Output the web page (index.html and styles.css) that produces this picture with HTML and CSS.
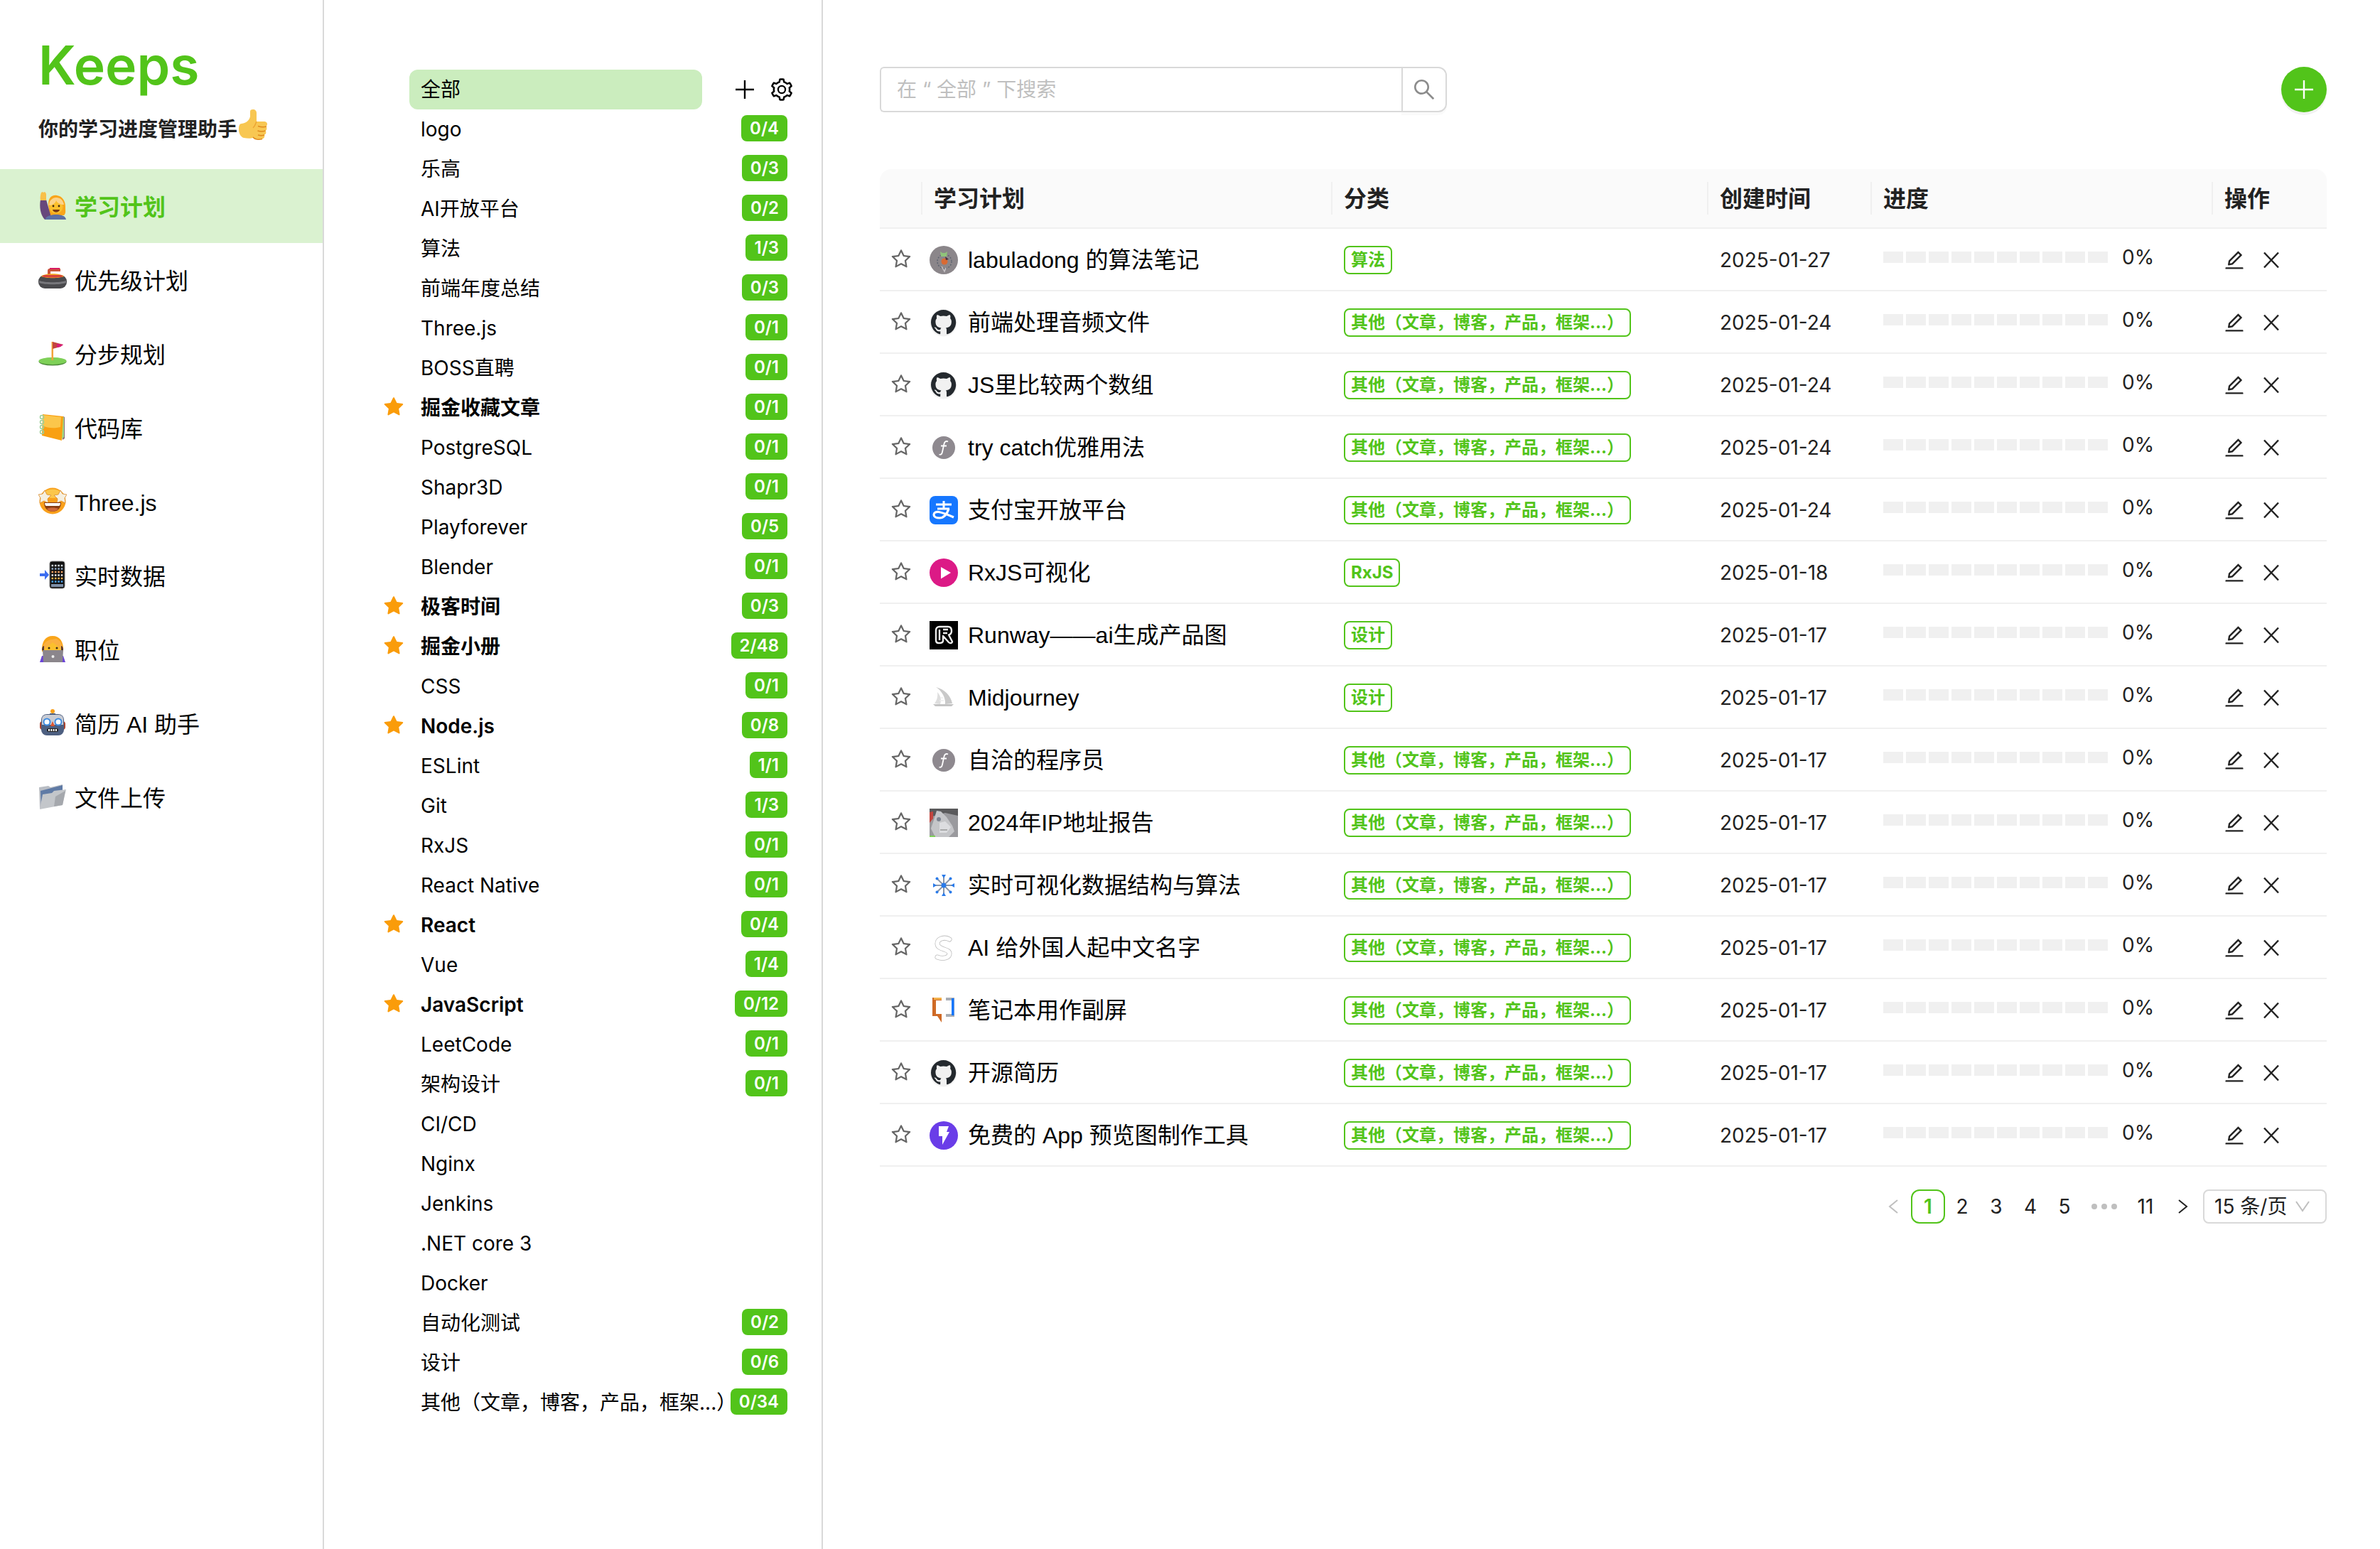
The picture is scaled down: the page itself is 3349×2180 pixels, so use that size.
FILE: index.html
```html
<!DOCTYPE html>
<html lang="zh-CN">
<head>
<meta charset="utf-8">
<title>Keeps</title>
<link rel="stylesheet" href="styles.css">
</head>
<body>
<svg class="sprite" aria-hidden="true">
  <symbol id="star-o" viewBox="0 0 1024 1024"><path d="M908.1 353.1l-253.9-36.9L540.7 86.1c-3.1-6.3-8.2-11.4-14.5-14.5-15.8-7.8-35-1.3-42.9 14.5L369.8 316.2l-253.9 36.9c-7 1-13.4 4.3-18.3 9.3a32.05 32.05 0 00.6 45.3l183.7 179.1-43.4 252.9a31.95 31.95 0 0046.4 33.7L512 754l227.1 119.4c6.2 3.3 13.4 4.4 20.3 3.2 17.4-3 29.1-19.5 26.1-36.9l-43.4-252.9 183.7-179.1c5-4.9 8.3-11.3 9.3-18.3 2.7-17.5-9.5-33.7-27-36.3zM664.8 561.6l36.1 210.3L512 672.7 323.1 772l36.1-210.3-152.8-149L417.6 382 512 190.7 606.4 382l211.2 30.7-152.8 148.9z"/></symbol>
  <symbol id="star-f" viewBox="0 0 1024 1024"><path d="M908.1 353.1l-253.9-36.9L540.7 86.1c-3.1-6.3-8.2-11.4-14.5-14.5-15.8-7.8-35-1.3-42.9 14.5L369.8 316.2l-253.9 36.9c-7 1-13.4 4.3-18.3 9.3a32.05 32.05 0 00.6 45.3l183.7 179.1-43.4 252.9a31.95 31.95 0 0046.4 33.7L512 754l227.1 119.4c6.2 3.3 13.4 4.4 20.3 3.2 17.4-3 29.1-19.5 26.1-36.9l-43.4-252.9 183.7-179.1c5-4.9 8.3-11.3 9.3-18.3 2.7-17.5-9.5-33.7-27-36.3z"/></symbol>
  <symbol id="search" viewBox="0 0 1024 1024"><path d="M909.6 854.5L649.9 594.8C690.2 542.7 712 479 712 412c0-80.2-31.3-155.4-87.9-212.1-56.6-56.7-132-87.9-212.1-87.9s-155.5 31.3-212.1 87.9C143.2 256.5 112 331.8 112 412c0 80.1 31.3 155.5 87.9 212.1C256.5 680.8 331.8 712 412 712c67 0 130.6-21.8 182.7-62l259.7 259.6a8.2 8.2 0 0011.6 0l43.6-43.5a8.2 8.2 0 000-11.6zM570.4 570.4C528 612.7 471.8 636 412 636s-116-23.3-158.4-65.6C211.3 528 188 471.8 188 412s23.3-116.1 65.6-158.4C296 211.3 352.2 188 412 188s116.1 23.2 158.4 65.6S636 352.2 636 412s-23.3 116.1-65.6 158.4z"/></symbol>
  <symbol id="edit" viewBox="0 0 1024 1024"><path d="M257.7 752c2 0 4-.2 6-.5L431.9 722c2-.4 3.9-1.3 5.3-2.8l423.9-423.9a9.96 9.96 0 000-14.1L694.9 114.9c-1.9-1.9-4.4-2.9-7.1-2.9s-5.2 1-7.1 2.9L256.8 538.8c-1.5 1.5-2.4 3.3-2.8 5.3l-29.5 168.2a33.5 33.5 0 009.4 29.8c6.6 6.4 14.9 9.9 23.8 9.9zm67.4-174.4L687.8 215l73.3 73.3-362.7 362.6-88.9 15.7 15.6-89zM880 836H144c-17.7 0-32 14.3-32 32v36c0 4.4 3.6 8 8 8h784c4.4 0 8-3.6 8-8v-36c0-17.7-14.3-32-32-32z"/></symbol>
  <symbol id="gear" viewBox="0 0 1024 1024"><path d="M924.8 625.7l-65.5-56c3.1-19 4.7-38.4 4.7-57.8s-1.6-38.8-4.7-57.8l65.5-56a32.03 32.03 0 009.3-35.2l-.9-2.6a443.74 443.74 0 00-79.7-137.9l-1.8-2.1a32.12 32.12 0 00-35.1-9.5l-81.3 28.9c-30-24.6-63.5-44-99.7-57.6l-15.7-85a32.05 32.05 0 00-25.8-25.7l-2.7-.5c-52.1-9.4-106.9-9.4-159 0l-2.7.5a32.05 32.05 0 00-25.8 25.7l-15.8 85.4a351.86 351.86 0 00-99 57.4l-81.9-29.1a32 32 0 00-35.1 9.5l-1.8 2.1a446.02 446.02 0 00-79.7 137.9l-.9 2.6c-4.5 12.5-.8 26.5 9.3 35.2l66.3 56.6c-3.1 18.8-4.6 38-4.6 57.1 0 19.2 1.5 38.4 4.6 57.1L99 625.5a32.03 32.03 0 00-9.3 35.2l.9 2.6c18.1 50.4 44.9 96.9 79.7 137.9l1.8 2.1a32.12 32.12 0 0035.1 9.5l81.9-29.1c29.8 24.5 63.1 43.9 99 57.4l15.8 85.4a32.05 32.05 0 0025.8 25.7l2.7.5a449.4 449.4 0 00159 0l2.7-.5a32.05 32.05 0 0025.8-25.7l15.7-85a350 350 0 0099.7-57.6l81.3 28.9a32 32 0 0035.1-9.5l1.8-2.1c34.8-41.1 61.6-87.5 79.7-137.9l.9-2.6c4.5-12.3.8-26.3-9.3-35zM788.3 465.9c2.5 15.1 3.8 30.6 3.8 46.1s-1.3 31-3.8 46.1l-6.6 40.1 74.7 63.9a370.03 370.03 0 01-42.6 73.6L721 702.8l-31.4 25.8c-23.9 19.6-50.5 35-79.3 45.8l-38.1 14.3-17.9 97a377.5 377.5 0 01-85 0l-17.9-97.2-37.8-14.5c-28.5-10.8-55-26.2-78.7-45.7l-31.4-25.9-93.4 33.2c-17-22.9-31.2-47.6-42.6-73.6l75.5-64.5-6.5-40c-2.4-14.9-3.7-30.3-3.7-45.5 0-15.3 1.2-30.6 3.7-45.5l6.5-40-75.5-64.5c11.3-26.1 25.6-50.7 42.6-73.6l93.4 33.2 31.4-25.9c23.7-19.5 50.2-34.9 78.7-45.7l37.9-14.3 17.9-97.2c28.1-3.2 56.8-3.2 85 0l17.9 97 38.1 14.3c28.7 10.8 55.4 26.2 79.3 45.8l31.4 25.8 92.8-32.9c17 22.9 31.2 47.6 42.6 73.6L781.8 426l6.5 39.9zM512 336a176 176 0 100 352 176 176 0 000-352zm0 64a112 112 0 110 224 112 112 0 010-224z"/></symbol>
  <symbol id="plus" viewBox="0 0 32 32"><path d="M16 3v26M3 16h26" fill="none" stroke="currentColor" stroke-width="2.4"/></symbol>
  <symbol id="close" viewBox="0 0 32 32"><path d="M6 5.500l20 21M26 5.500l-20 21" fill="none" stroke="currentColor" stroke-width="2.500"/></symbol>
  <symbol id="github" viewBox="0 0 40 40"><circle cx="19.500" cy="20.500" r="19" fill="#f1f1f1"/><path transform="translate(2 2) scale(2.200)" fill="#24292e" d="M8 0C3.580 0 0 3.580 0 8c0 3.540 2.290 6.530 5.470 7.590.4.070.55-.17.55-.38 0-.19-.01-.82-.01-1.490-2.010.37-2.530-.49-2.690-.94-.09-.23-.48-.94-.82-1.130-.28-.15-.68-.52-.01-.53.63-.01 1.080.58 1.230.82.72 1.210 1.870.87 2.330.66.07-.52.28-.87.51-1.070-1.780-.2-3.640-.89-3.640-3.950 0-.87.31-1.590.82-2.150-.08-.2-.36-1.020.08-2.120 0 0 .67-.21 2.200.82.64-.18 1.320-.27 2-.27s1.360.09 2 .27c1.530-1.040 2.200-.82 2.200-.82.44 1.100.16 1.920.08 2.120.51.56.82 1.270.82 2.150 0 3.070-1.870 3.750-3.650 3.950.29.25.54.73.54 1.480 0 1.070-.01 1.930-.01 2.200 0 .21.15.46.55.38A8.010 8.010 0 0016 8c0-4.420-3.580-8-8-8z"/></symbol>
  <symbol id="fn" viewBox="0 0 40 40"><circle cx="20" cy="20" r="16" fill="#8e898f"/><path d="M26 11.500c-3-1.500-5 .5-5.600 3.500l-2.400 11c-.6 3-2 4.500-4.500 3.500M16 17.500h8" fill="none" stroke="#fff" stroke-width="1.800"/></symbol>
</svg>

<aside class="sidebar">
  <header class="brand">
    <h1>Keeps</h1>
    <p>你的学习进度管理助手<svg class="thumb" viewBox="0 0 40 44" aria-hidden="true"><path d="M16 3c0-2 1-3 4-3 3 0 5 2 5 5v12h10c4 0 5 2 5 3.500 0 2-1 3-2 3.500 2 1 2 5-.5 6 1.500 1.500 1 5-1.500 5.500 1 3-.5 5.500-3 6-4 1-10 .5-13-1.500-3 1-8 1-13 0C3 39 0 34 0 28c0-5 1-8 4-8 7-1 11-5 12-10z" fill="#f8c752"/><path d="M39 24c-3 1-9 .5-12-.5M37.500 30c-3 1-8 1-11 0M36 36c-3 1-7 .5-9 0M20 39c2 3 8 4 13 2.500" fill="none" stroke="#e08a1d" stroke-width="1.500"/><path d="M25 17c-2 4-2 7-5 9" fill="none" stroke="#eda532" stroke-width="1.500"/></svg></p>
  </header>
  <nav>
    <a class="nav-item active" href="#"><svg viewBox="0 0 40 40"><path d="M14 19c0-9 4-14 12-13 8 1 12 8 12 16 0 7 1 9-2 12H16z" fill="#f9a51a"/><path d="M3 12h8l4 14 4 14H9C3 34 1 22 3 12z" fill="#67477c"/><path d="M3 13c-1-4 0-8 1-11l2-1 1 1 2-1 1 1 1 2v9z" fill="#f8c04a"/><circle cx="25" cy="22" r="9.500" fill="#fbc02d"/><path d="M15 20c5 0 9-3 10-7 2 4 6 6 11 6-1-6-5-10-11-10-5 0-10 4-10 11z" fill="#fbd38a"/><circle cx="21" cy="21" r="1.400" fill="#3d2a12"/><circle cx="29" cy="21" r="1.400" fill="#3d2a12"/><path d="M20 26h10c-1 5-9 5-10 0z" fill="#7a3b12"/><path d="M9 40c2-5 8-7 16-7s13 2 14 7z" fill="#5d6fa3"/></svg>学习计划</a>
    <a class="nav-item" href="#"><svg viewBox="0 0 40 40"><path d="M13 16V8c0-2 1-3 3-3h15v4H17v7z" fill="#c9533b"/><path d="M16 4h14v2H16z" fill="#d81b60"/><rect x="0" y="14" width="40" height="19" rx="9" fill="#4a4a4d"/><path d="M4 16c4-5 28-5 32 0-6 3-26 3-32 0z" fill="#f5a623"/><path d="M5 16c4 2 26 2 30 0l-3-2H8z" fill="#d8433a"/><path d="M1 22c8 3 30 3 38 0v3c-8 3-30 3-38 0z" fill="#77777b"/></svg>优先级计划</a>
    <a class="nav-item" href="#"><svg viewBox="0 0 40 40"><ellipse cx="20" cy="32" rx="19.500" ry="5.500" fill="#4f8e3c"/><ellipse cx="20" cy="31" rx="19.500" ry="5" fill="#7ed057"/><path d="M18.500 4h2.500v26h-2.500z" fill="#f2a33a"/><path d="M20 4l15 4-4 3-11 3z" fill="#c2453f"/><path d="M26 7l9 1-4 3-5 1z" fill="#d81b7a"/></svg>分步规划</a>
    <a class="nav-item" href="#"><svg viewBox="0 0 40 40"><path d="M35 5l2 1v30l-3 2z" fill="#8a6a78"/><path d="M32 5l4 1v28l-3 3z" fill="#9fdc8a"/><path d="M6 2l29 3-2 34L5 32z" fill="#f9a011"/><path d="M6 3l26 3-1 14c-8 2-18 2-25-2z" fill="#fbc64b"/><g fill="none" stroke="#9ccf9a" stroke-width="1.500"><circle cx="5" cy="6" r="2.500"/><circle cx="5" cy="13" r="2.500"/><circle cx="5" cy="20" r="2.500"/><circle cx="5" cy="27" r="2.500"/></g></svg>代码库</a>
    <a class="nav-item" href="#"><svg viewBox="0 0 40 40"><circle cx="20" cy="20" r="18.500" fill="#f9a01b"/><path d="M8 8c5-6 19-6 24 0 3 4-4 8-12 8S5 12 8 8z" fill="#fbc64b"/><path d="M9 5l3 6 6 1-5 5 1 6-6-3-6 3 1-7-3-5 6-1zM31 5l-3 6-6 1 5 5-1 6 6-3 6 3-1-7 3-5-6-1z" fill="#f5efe0" stroke="#d98a2b" stroke-width=".8"/><path d="M8 22h24c0 8-5 13-12 13S8 30 8 22z" fill="#8a3d12"/><path d="M9 23h22c0 2-1 4-2 4H11c-1 0-2-2-2-4z" fill="#fff"/><path d="M12 31c4-2 12-2 16 0-4 5-12 5-16 0z" fill="#cf6a3d"/></svg>Three.js</a>
    <a class="nav-item" href="#"><svg viewBox="0 0 40 40"><rect x="16" y="1" width="21" height="38" rx="3" fill="#111"/><rect x="16" y="1" width="21" height="38" rx="3" fill="none" stroke="#777" stroke-width="1"/><path d="M2 18h7v-5l6 7-6 7v-5H2z" fill="#3c6df0"/><g stroke-width="2.600" stroke-dasharray="2.600 1.800"><path d="M18.500 7h17" stroke="#cfd8dc"/><path d="M18.500 11.500h17" stroke="#8ea6c0"/><path d="M18.500 16h17" stroke="#f0a060"/><path d="M18.500 20.500h17" stroke="#e8e8e8"/><path d="M18.500 25h17" stroke="#f2b04a"/><path d="M18.500 29.500h17" stroke="#4aa3f0"/></g><path d="M18 33h17v4H18z" fill="#7d8fa8"/></svg>实时数据</a>
    <a class="nav-item" href="#"><svg viewBox="0 0 40 40"><path d="M5 24C4 10 10 2 20 2s16 8 15 22z" fill="#f9a51a"/><path d="M8 18l4-8 16-2 4 10v8H8z" fill="#fbc02d"/><path d="M6 22c0-9 5-14 13-15l6-1c6 2 9 8 9 16l-5-4-9-7c-4 4-9 7-14 11z" fill="#fbb040"/><path d="M5 22c0-3 1-6 3-6v7zM35 22c0-3-1-6-3-6v7z" fill="#5a3a30"/><circle cx="15" cy="19" r="1.500" fill="#3d2a12"/><circle cx="26" cy="19" r="1.500" fill="#3d2a12"/><path d="M2 39l3-9h30l3 9z" fill="#6b44d8"/><path d="M6 22h29l-1 17H7z" fill="#8b868c"/><circle cx="20.500" cy="31" r="2" fill="#eee"/></svg>职位</a>
    <a class="nav-item" href="#"><svg viewBox="0 0 40 40"><circle cx="20" cy="4" r="3" fill="#f9a01b"/><path d="M16 7h8v4h-8z" fill="#4b5d7d"/><rect x="2" y="18" width="36" height="12" rx="4" fill="#b0452f"/><rect x="4" y="8" width="32" height="30" rx="8" fill="#4d5f80"/><path d="M5 23v-7c0-5 3-7 7-7h16c4 0 7 2 7 7v7z" fill="#c9ccd4"/><circle cx="12" cy="19" r="4.500" fill="#fff" stroke="#3d8be0" stroke-width="2"/><circle cx="28" cy="19" r="4.500" fill="#fff" stroke="#3d8be0" stroke-width="2"/><path d="M20 18l3 7h-6z" fill="#e0552f"/><rect x="12" y="28" width="16" height="5" rx="2.500" fill="#222"/><path d="M14 30.500h12" stroke="#fff" stroke-width="3" stroke-dasharray="2 1.300"/></svg>简历 AI 助手</a>
    <a class="nav-item" href="#"><svg viewBox="0 0 40 40"><path d="M1 7l13-2 3 2 17-4v24L2 37z" fill="#b9bdc4"/><path d="M3 12l31-8v22L4 34z" fill="#5f7aa5"/><path d="M6 17l13-2 3-3 17-2-5 22-32 6z" fill="#c3c6ca"/><path d="M24 20l14-8-4 20-12 2z" fill="#a5a8ad"/></svg>文件上传</a>
  </nav>
</aside>

<section class="categories" aria-label="分类">
  <div class="category-head">
    <span class="mark"></span>
    <a class="all" href="#">全部</a>
    <button class="icon-button" aria-label="添加分类"><svg class="icon-32"><use href="#plus"/></svg></button>
    <button class="icon-button" aria-label="分类设置"><svg class="icon-36"><use href="#gear"/></svg></button>
  </div>
  <ul>
    <li><span class="mark"></span><a href="#">logo</a><b class="badge">0/4</b></li>
    <li><span class="mark"></span><a href="#">乐高</a><b class="badge">0/3</b></li>
    <li><span class="mark"></span><a href="#">AI开放平台</a><b class="badge">0/2</b></li>
    <li><span class="mark"></span><a href="#">算法</a><b class="badge">1/3</b></li>
    <li><span class="mark"></span><a href="#">前端年度总结</a><b class="badge">0/3</b></li>
    <li><span class="mark"></span><a href="#">Three.js</a><b class="badge">0/1</b></li>
    <li><span class="mark"></span><a href="#">BOSS直聘</a><b class="badge">0/1</b></li>
    <li class="starred"><svg class="mark"><use href="#star-f"/></svg><a href="#">掘金收藏文章</a><b class="badge">0/1</b></li>
    <li><span class="mark"></span><a href="#">PostgreSQL</a><b class="badge">0/1</b></li>
    <li><span class="mark"></span><a href="#">Shapr3D</a><b class="badge">0/1</b></li>
    <li><span class="mark"></span><a href="#">Playforever</a><b class="badge">0/5</b></li>
    <li><span class="mark"></span><a href="#">Blender</a><b class="badge">0/1</b></li>
    <li class="starred"><svg class="mark"><use href="#star-f"/></svg><a href="#">极客时间</a><b class="badge">0/3</b></li>
    <li class="starred"><svg class="mark"><use href="#star-f"/></svg><a href="#">掘金小册</a><b class="badge">2/48</b></li>
    <li><span class="mark"></span><a href="#">CSS</a><b class="badge">0/1</b></li>
    <li class="starred"><svg class="mark"><use href="#star-f"/></svg><a href="#">Node.js</a><b class="badge">0/8</b></li>
    <li><span class="mark"></span><a href="#">ESLint</a><b class="badge">1/1</b></li>
    <li><span class="mark"></span><a href="#">Git</a><b class="badge">1/3</b></li>
    <li><span class="mark"></span><a href="#">RxJS</a><b class="badge">0/1</b></li>
    <li><span class="mark"></span><a href="#">React Native</a><b class="badge">0/1</b></li>
    <li class="starred"><svg class="mark"><use href="#star-f"/></svg><a href="#">React</a><b class="badge">0/4</b></li>
    <li><span class="mark"></span><a href="#">Vue</a><b class="badge">1/4</b></li>
    <li class="starred"><svg class="mark"><use href="#star-f"/></svg><a href="#">JavaScript</a><b class="badge">0/12</b></li>
    <li><span class="mark"></span><a href="#">LeetCode</a><b class="badge">0/1</b></li>
    <li><span class="mark"></span><a href="#">架构设计</a><b class="badge">0/1</b></li>
    <li><span class="mark"></span><a href="#">CI/CD</a></li>
    <li><span class="mark"></span><a href="#">Nginx</a></li>
    <li><span class="mark"></span><a href="#">Jenkins</a></li>
    <li><span class="mark"></span><a href="#">.NET core 3</a></li>
    <li><span class="mark"></span><a href="#">Docker</a></li>
    <li><span class="mark"></span><a href="#">自动化测试</a><b class="badge">0/2</b></li>
    <li><span class="mark"></span><a href="#">设计</a><b class="badge">0/6</b></li>
    <li><span class="mark"></span><a href="#">其他（文章，博客，产品，框架...）</a><b class="badge">0/34</b></li>
  </ul>
</section>

<main>
  <div class="toolbar">
    <form class="search">
      <input type="text" aria-label="搜索" placeholder="在 “ 全部 ” 下搜索">
      <button type="button" aria-label="搜索"><svg class="icon-36"><use href="#search"/></svg></button>
    </form>
    <button class="add" aria-label="添加学习计划"><svg class="icon-32"><use href="#plus"/></svg></button>
  </div>

  <table>
    <colgroup><col class="c-star"><col class="c-title"><col><col class="c-date"><col class="c-progress"><col class="c-actions"></colgroup>
    <thead>
      <tr><th></th><th>学习计划</th><th>分类</th><th>创建时间</th><th>进度</th><th>操作</th></tr>
    </thead>
    <tbody>
      <tr><td><button class="fav" aria-label="收藏"><svg class="icon-32"><use href="#star-o"/></svg></button></td>
        <td><a class="plan" href="#"><svg viewBox="0 0 40 40"><circle cx="20" cy="20" r="20" fill="#8b868a"/><circle cx="21" cy="22" r="10" fill="none" stroke="#5d6470" stroke-width="1.500" stroke-dasharray="2 2"/><path d="M15 8l3 2h4l3-2-1 7h-8z" fill="#8fc47a"/><circle cx="21" cy="22" r="4.500" fill="#d96a34"/><path d="M22 15l5 4-4 1z" fill="#4a3040"/><path d="M17 29l4 7 2-5" fill="none" stroke="#c6c2c6" stroke-width="1.500"/></svg>labuladong 的算法笔记</a></td>
        <td><span class="tag">算法</span></td><td>2025-01-27</td>
        <td><div class="progress"><span class="track" role="progressbar" aria-valuenow="0" aria-label="进度"></span>0%</div></td>
        <td><div class="actions"><button aria-label="编辑"><svg class="icon-32"><use href="#edit"/></svg></button><button aria-label="删除"><svg class="icon-32"><use href="#close"/></svg></button></div></td></tr>
      <tr><td><button class="fav" aria-label="收藏"><svg class="icon-32"><use href="#star-o"/></svg></button></td>
        <td><a class="plan" href="#"><svg><use href="#github"/></svg>前端处理音频文件</a></td>
        <td><span class="tag">其他（文章，博客，产品，框架...）</span></td><td>2025-01-24</td>
        <td><div class="progress"><span class="track" role="progressbar" aria-valuenow="0" aria-label="进度"></span>0%</div></td>
        <td><div class="actions"><button aria-label="编辑"><svg class="icon-32"><use href="#edit"/></svg></button><button aria-label="删除"><svg class="icon-32"><use href="#close"/></svg></button></div></td></tr>
      <tr><td><button class="fav" aria-label="收藏"><svg class="icon-32"><use href="#star-o"/></svg></button></td>
        <td><a class="plan" href="#"><svg><use href="#github"/></svg>JS里比较两个数组</a></td>
        <td><span class="tag">其他（文章，博客，产品，框架...）</span></td><td>2025-01-24</td>
        <td><div class="progress"><span class="track" role="progressbar" aria-valuenow="0" aria-label="进度"></span>0%</div></td>
        <td><div class="actions"><button aria-label="编辑"><svg class="icon-32"><use href="#edit"/></svg></button><button aria-label="删除"><svg class="icon-32"><use href="#close"/></svg></button></div></td></tr>
      <tr><td><button class="fav" aria-label="收藏"><svg class="icon-32"><use href="#star-o"/></svg></button></td>
        <td><a class="plan" href="#"><svg><use href="#fn"/></svg>try catch优雅用法</a></td>
        <td><span class="tag">其他（文章，博客，产品，框架...）</span></td><td>2025-01-24</td>
        <td><div class="progress"><span class="track" role="progressbar" aria-valuenow="0" aria-label="进度"></span>0%</div></td>
        <td><div class="actions"><button aria-label="编辑"><svg class="icon-32"><use href="#edit"/></svg></button><button aria-label="删除"><svg class="icon-32"><use href="#close"/></svg></button></div></td></tr>
      <tr><td><button class="fav" aria-label="收藏"><svg class="icon-32"><use href="#star-o"/></svg></button></td>
        <td><a class="plan" href="#"><svg viewBox="0 0 40 40"><rect width="40" height="40" rx="8" fill="#1677ff"/><g fill="none" stroke="#fff" stroke-width="3"><path d="M9 12h22M20 7v11M11 18h17"/><path d="M27 18c-2 6-6 13-13 13-5 0-8-2-8-4.500 0-3 3-4.500 7-4 6 1 13 4 21 7.500" stroke-width="3.200"/></g></svg>支付宝开放平台</a></td>
        <td><span class="tag">其他（文章，博客，产品，框架...）</span></td><td>2025-01-24</td>
        <td><div class="progress"><span class="track" role="progressbar" aria-valuenow="0" aria-label="进度"></span>0%</div></td>
        <td><div class="actions"><button aria-label="编辑"><svg class="icon-32"><use href="#edit"/></svg></button><button aria-label="删除"><svg class="icon-32"><use href="#close"/></svg></button></div></td></tr>
      <tr><td><button class="fav" aria-label="收藏"><svg class="icon-32"><use href="#star-o"/></svg></button></td>
        <td><a class="plan" href="#"><svg viewBox="0 0 40 40"><circle cx="20" cy="20" r="20" fill="#dc1a86"/><path d="M16 12l14 8-14 8.500z" fill="#fff"/></svg>RxJS可视化</a></td>
        <td><span class="tag">RxJS</span></td><td>2025-01-18</td>
        <td><div class="progress"><span class="track" role="progressbar" aria-valuenow="0" aria-label="进度"></span>0%</div></td>
        <td><div class="actions"><button aria-label="编辑"><svg class="icon-32"><use href="#edit"/></svg></button><button aria-label="删除"><svg class="icon-32"><use href="#close"/></svg></button></div></td></tr>
      <tr><td><button class="fav" aria-label="收藏"><svg class="icon-32"><use href="#star-o"/></svg></button></td>
        <td><a class="plan" href="#"><svg viewBox="0 0 40 40"><rect width="40" height="40" fill="#000"/><path d="M13 31c-3 0-4-1-4-4V13c0-3 2-5 5-5h12c4 0 5 3 5 6s-2 5-4 5.500L32 29c0 2-3 3-5 1l-8-9v7c0 2-2 3-6 3zM14 12v15M19 12h7M19 17h6" fill="none" stroke="#eee" stroke-width="2.400" stroke-linejoin="round"/></svg>Runway——ai生成产品图</a></td>
        <td><span class="tag">设计</span></td><td>2025-01-17</td>
        <td><div class="progress"><span class="track" role="progressbar" aria-valuenow="0" aria-label="进度"></span>0%</div></td>
        <td><div class="actions"><button aria-label="编辑"><svg class="icon-32"><use href="#edit"/></svg></button><button aria-label="删除"><svg class="icon-32"><use href="#close"/></svg></button></div></td></tr>
      <tr><td><button class="fav" aria-label="收藏"><svg class="icon-32"><use href="#star-o"/></svg></button></td>
        <td><a class="plan" href="#"><svg viewBox="0 0 40 40"><path d="M9 5c12 3 21 12 23 23l-10 1c1-9-5-19-13-24z" fill="#c9c9c9"/><path d="M11 12c5 6 6 11 4 17l-8-1c3-4 5-9 4-16z" fill="#dedede"/><path d="M5 29h29l-3 3H8z" fill="#c4c4c4"/><path d="M14 24h6M15 20h4" stroke="#eee" stroke-width="1.500"/></svg>Midjourney</a></td>
        <td><span class="tag">设计</span></td><td>2025-01-17</td>
        <td><div class="progress"><span class="track" role="progressbar" aria-valuenow="0" aria-label="进度"></span>0%</div></td>
        <td><div class="actions"><button aria-label="编辑"><svg class="icon-32"><use href="#edit"/></svg></button><button aria-label="删除"><svg class="icon-32"><use href="#close"/></svg></button></div></td></tr>
      <tr><td><button class="fav" aria-label="收藏"><svg class="icon-32"><use href="#star-o"/></svg></button></td>
        <td><a class="plan" href="#"><svg><use href="#fn"/></svg>自洽的程序员</a></td>
        <td><span class="tag">其他（文章，博客，产品，框架...）</span></td><td>2025-01-17</td>
        <td><div class="progress"><span class="track" role="progressbar" aria-valuenow="0" aria-label="进度"></span>0%</div></td>
        <td><div class="actions"><button aria-label="编辑"><svg class="icon-32"><use href="#edit"/></svg></button><button aria-label="删除"><svg class="icon-32"><use href="#close"/></svg></button></div></td></tr>
      <tr><td><button class="fav" aria-label="收藏"><svg class="icon-32"><use href="#star-o"/></svg></button></td>
        <td><a class="plan" href="#"><svg viewBox="0 0 40 40"><rect width="40" height="40" fill="#9a9a9e"/><path d="M0 0h40v10L22 6 0 12z" fill="#5a5a5c"/><path d="M0 5l5-1v10l-5 6z" fill="#c2453f"/><path d="M10 3l6 1 8 8 8 12 3 8-8 8H8L2 28l4-12z" fill="#c4c5c8"/><path d="M14 20l8-2 8 8-6 8h-10z" fill="#dcdde0"/><circle cx="13" cy="15" r="3" fill="#7b8390"/><path d="M15 30h10" stroke="#999" stroke-width="1.500"/><path d="M0 38h8v2H0z" fill="#7ed057"/></svg>2024年IP地址报告</a></td>
        <td><span class="tag">其他（文章，博客，产品，框架...）</span></td><td>2025-01-17</td>
        <td><div class="progress"><span class="track" role="progressbar" aria-valuenow="0" aria-label="进度"></span>0%</div></td>
        <td><div class="actions"><button aria-label="编辑"><svg class="icon-32"><use href="#edit"/></svg></button><button aria-label="删除"><svg class="icon-32"><use href="#close"/></svg></button></div></td></tr>
      <tr><td><button class="fav" aria-label="收藏"><svg class="icon-32"><use href="#star-o"/></svg></button></td>
        <td><a class="plan" href="#"><svg viewBox="0 0 40 40"><path d="M20 7v26M7 20h26M11 11l18 18M29 11L11 29" stroke="#8a96a8" stroke-width="2"/><g fill="#2a7bea"><circle cx="20" cy="20" r="3.500"/><path d="M17 5h6l-3 5zM17 35h6l-3-5zM5 17v6l5-3zM35 17v6l-5-3z"/><circle cx="10.500" cy="10.500" r="2"/><circle cx="29.500" cy="10.500" r="2"/><circle cx="10.500" cy="29.500" r="2"/><circle cx="29.500" cy="29.500" r="2"/></g></svg>实时可视化数据结构与算法</a></td>
        <td><span class="tag">其他（文章，博客，产品，框架...）</span></td><td>2025-01-17</td>
        <td><div class="progress"><span class="track" role="progressbar" aria-valuenow="0" aria-label="进度"></span>0%</div></td>
        <td><div class="actions"><button aria-label="编辑"><svg class="icon-32"><use href="#edit"/></svg></button><button aria-label="删除"><svg class="icon-32"><use href="#close"/></svg></button></div></td></tr>
      <tr><td><button class="fav" aria-label="收藏"><svg class="icon-32"><use href="#star-o"/></svg></button></td>
        <td><a class="plan" href="#"><svg viewBox="0 0 40 40"><g fill="none" stroke-linecap="round"><path d="M28 8c-7-4-17-1-17 6 0 9 17 7 17 14 0 6-9 8-17 5" stroke="#bdbdbd" stroke-width="7"/><path d="M28 8c-7-4-17-1-17 6 0 9 17 7 17 14 0 6-9 8-17 5" stroke="#fff" stroke-width="5.400"/></g></svg>AI 给外国人起中文名字</a></td>
        <td><span class="tag">其他（文章，博客，产品，框架...）</span></td><td>2025-01-17</td>
        <td><div class="progress"><span class="track" role="progressbar" aria-valuenow="0" aria-label="进度"></span>0%</div></td>
        <td><div class="actions"><button aria-label="编辑"><svg class="icon-32"><use href="#edit"/></svg></button><button aria-label="删除"><svg class="icon-32"><use href="#close"/></svg></button></div></td></tr>
      <tr><td><button class="fav" aria-label="收藏"><svg class="icon-32"><use href="#star-o"/></svg></button></td>
        <td><a class="plan" href="#"><svg viewBox="0 0 40 40"><path d="M4 2h13v4H9v19h8v12l-6-9H4z" fill="#cf6a26"/><path d="M6 2h11v3H6z" fill="#f2b04a"/><path d="M23 2h12v27H23v-4h8V6h-8z" fill="#a9adb3"/><path d="M31 3h3.500v24H31z" fill="#1677ff"/></svg>笔记本用作副屏</a></td>
        <td><span class="tag">其他（文章，博客，产品，框架...）</span></td><td>2025-01-17</td>
        <td><div class="progress"><span class="track" role="progressbar" aria-valuenow="0" aria-label="进度"></span>0%</div></td>
        <td><div class="actions"><button aria-label="编辑"><svg class="icon-32"><use href="#edit"/></svg></button><button aria-label="删除"><svg class="icon-32"><use href="#close"/></svg></button></div></td></tr>
      <tr><td><button class="fav" aria-label="收藏"><svg class="icon-32"><use href="#star-o"/></svg></button></td>
        <td><a class="plan" href="#"><svg><use href="#github"/></svg>开源简历</a></td>
        <td><span class="tag">其他（文章，博客，产品，框架...）</span></td><td>2025-01-17</td>
        <td><div class="progress"><span class="track" role="progressbar" aria-valuenow="0" aria-label="进度"></span>0%</div></td>
        <td><div class="actions"><button aria-label="编辑"><svg class="icon-32"><use href="#edit"/></svg></button><button aria-label="删除"><svg class="icon-32"><use href="#close"/></svg></button></div></td></tr>
      <tr><td><button class="fav" aria-label="收藏"><svg class="icon-32"><use href="#star-o"/></svg></button></td>
        <td><a class="plan" href="#"><svg viewBox="0 0 40 40"><circle cx="20" cy="20" r="20" fill="#6a3de8"/><path d="M13 7h14l-3 8h4L18 33v-12h-5z" fill="#fff"/></svg>免费的 App 预览图制作工具</a></td>
        <td><span class="tag">其他（文章，博客，产品，框架...）</span></td><td>2025-01-17</td>
        <td><div class="progress"><span class="track" role="progressbar" aria-valuenow="0" aria-label="进度"></span>0%</div></td>
        <td><div class="actions"><button aria-label="编辑"><svg class="icon-32"><use href="#edit"/></svg></button><button aria-label="删除"><svg class="icon-32"><use href="#close"/></svg></button></div></td></tr>
    </tbody>
  </table>

  <nav class="pagination" aria-label="分页">
    <button class="muted" aria-label="上一页" disabled><svg viewBox="0 0 24 24"><path d="M17 3L6 12l11 9"/></svg></button>
    <button class="current">1</button>
    <button>2</button>
    <button>3</button>
    <button>4</button>
    <button>5</button>
    <span class="dots"><i></i><i></i><i></i></span>
    <button class="wide">11</button>
    <button class="wide" aria-label="下一页"><svg viewBox="0 0 24 24"><path d="M7 3l11 9-11 9"/></svg></button>
    <label class="page-size"><select aria-label="每页条数"><option>15 条/页</option></select><svg viewBox="0 0 24 24"><path d="M3 5l9 13 9-13"/></svg></label>
  </nav>
</main>
</body>
</html>
```
FILE: styles.css
```css
:root {
  --green: #52c41a;
  --text: #222;
  --line: #d9d9d9;
}

* {
  box-sizing: border-box;
}

body {
  margin: 0;
  min-height: 100vh;
  display: flex;
  background: #fff;
  color: #000;
  font: 28px/44px Inter, "Noto Sans CJK SC", sans-serif;
}

a {
  color: inherit;
  text-decoration: none;
}

button,
input,
select {
  font: inherit;
  color: inherit;
}

button {
  padding: 0;
  border: 0;
  background: none;
  display: flex;
  align-items: center;
  justify-content: center;
}

svg {
  flex: none;
  fill: currentColor;
}

.sprite {
  display: none;
}

.icon-32 {
  width: 32px;
  height: 32px;
}

.icon-36 {
  width: 36px;
  height: 36px;
}

/* Sidebar */
.sidebar {
  flex: 0 0 456px;
  border-right: 2px solid var(--line);
}

.brand {
  height: 238px;
  padding: 44px 54px 0;
}

.brand h1 {
  margin: 0;
  color: var(--green);
  font-size: 75px;
  line-height: 96px;
  font-weight: 600;
}

.brand p {
  margin: 12px 0 0;
  display: flex;
  align-items: center;
  color: var(--text);
  font-weight: 700;
  line-height: 60px;
}

.thumb {
  width: 40px;
  height: 44px;
  margin: 0 0 12px 2px;
}

.nav-item {
  height: 104px;
  padding: 4px 54px 0;
  display: flex;
  align-items: center;
  gap: 11px;
  font-family: "Liberation Sans", "Noto Sans CJK SC", sans-serif;
  font-size: 32px;
}

.nav-item svg {
  width: 40px;
  height: 40px;
  margin-bottom: 6px;
}

.nav-item.active {
  background: #daf2d0;
  color: var(--green);
  font-weight: 700;
}

/* Categories */
.categories {
  flex: 0 0 702px;
  min-width: 0;
  padding: 98px 48px 60px 82px;
  border-right: 2px solid var(--line);
}

.category-head {
  display: flex;
  align-items: center;
  margin-right: -10px;
}

.all {
  flex: 1;
  height: 56px;
  padding: 0 16px;
  border-radius: 12px;
  background: #cbedbe;
  line-height: 56px;
}

.category-head .icon-button {
  margin-left: 18px;
}

.category-head .all + .icon-button {
  margin-left: 44px;
}

.categories ul {
  margin: 0;
  padding: 0;
  list-style: none;
}

.categories li {
  height: 56px;
  display: flex;
  align-items: center;
}

.mark {
  flex: none;
  width: 32px;
  height: 32px;
  margin: 0 6px 3px 0;
  color: #fa9c0a;
}

.categories li a {
  flex: 1;
  min-width: 0;
  padding-left: 16px;
  white-space: nowrap;
}

.starred a {
  font-weight: 600;
}

.badge {
  height: 37px;
  margin-bottom: 3px;
  padding: 0 12px;
  border-radius: 8px;
  background: var(--green);
  color: #fff;
  font-size: 24px;
  line-height: 37px;
  font-weight: 600;
}

/* Main */
main {
  flex: 1;
  min-width: 0;
  padding: 94px 75px 0 80px;
  color: var(--text);
}

.toolbar {
  display: flex;
  justify-content: space-between;
  margin-bottom: 80px;
}

.search {
  display: flex;
  width: 798px;
  height: 64px;
}

.search input {
  flex: 1;
  min-width: 0;
  padding: 0 22px;
  border: 2px solid var(--line);
  border-right: 0;
  border-radius: 6px 0 0 6px;
  outline: 0;
}

.search input::placeholder {
  color: #bfbfbf;
}

.search button {
  width: 64px;
  border: 2px solid var(--line);
  border-radius: 0 12px 12px 0;
  box-shadow: 0 4px 0 rgba(0, 0, 0, 0.02);
  color: #8c8c8c;
}

.add {
  width: 64px;
  height: 64px;
  border-radius: 50%;
  background: var(--green);
  box-shadow: 0 4px 0 rgba(0, 0, 0, 0.05);
  color: #fff;
}

table {
  width: 100%;
  table-layout: fixed;
  border-spacing: 0;
}

.c-star {
  width: 60px;
}

.c-title {
  width: 577px;
}

.c-date {
  width: 230px;
}

.c-progress {
  width: 480px;
}

.c-actions {
  width: 160px;
}

th {
  height: 84px;
  padding: 2px 16px 0;
  border-bottom: 2px solid #f0f0f0;
  background: linear-gradient(#f0f0f0, #f0f0f0) right center / 2px 46px no-repeat #fafafa;
  font-size: 32px;
  font-weight: 600;
  text-align: left;
}

th:first-child {
  border-top-left-radius: 16px;
}

th:last-child {
  border-top-right-radius: 16px;
  background: #fafafa;
}

td {
  height: 88px;
  padding: 2px 16px 0;
  border-bottom: 2px solid #f0f0f0;
}

td:nth-child(1) {
  padding: 0 14px;
}

td:nth-child(2) {
  padding: 2px 10px 0;
}

td:nth-child(5) {
  padding: 0 16px 6px;
}

.fav {
  color: #666;
}

.plan {
  display: flex;
  align-items: center;
  gap: 14px;
  color: #000;
  font-family: "Liberation Sans", "Noto Sans CJK SC", sans-serif;
  font-size: 32px;
  white-space: nowrap;
}

.plan svg {
  width: 40px;
  height: 40px;
}

.tag {
  display: block;
  width: max-content;
  height: 40px;
  padding: 0 8px;
  border: 2px solid var(--green);
  border-radius: 8px;
  color: var(--green);
  font-size: 24px;
  line-height: 36px;
  font-weight: 700;
}

.progress {
  display: flex;
  align-items: center;
  gap: 20px;
}

.track {
  width: 316px;
  height: 16px;
  background: repeating-linear-gradient(90deg, #f0f0f0 0 28px, transparent 28px 32px);
}

.actions {
  display: flex;
  gap: 20px;
  margin-left: -2px;
}

/* Pagination */
.pagination {
  display: flex;
  justify-content: flex-end;
  margin-top: 32px;
}

.pagination button {
  width: 48px;
  height: 48px;
}

.pagination .wide {
  width: 52px;
}

.pagination svg {
  width: 24px;
  height: 24px;
  fill: none;
  stroke: currentColor;
  stroke-width: 2;
}

.pagination .muted {
  color: #bfbfbf;
}

.pagination .current {
  border: 2px solid var(--green);
  border-radius: 12px;
  color: var(--green);
  font-weight: 600;
}

.dots {
  display: flex;
  align-items: center;
  justify-content: center;
  gap: 6px;
  width: 64px;
}

.dots i {
  width: 8px;
  height: 8px;
  border-radius: 50%;
  background: #bfbfbf;
}

.page-size {
  display: grid;
  align-items: center;
  width: 174px;
  margin-left: 3px;
}

.page-size select,
.page-size svg {
  grid-area: 1 / 1;
}

.page-size select {
  width: 100%;
  height: 48px;
  padding: 0 14px;
  border: 2px solid var(--line);
  border-radius: 8px;
  background: #fff;
  appearance: none;
}

.page-size svg {
  justify-self: end;
  margin-right: 22px;
  color: #bfbfbf;
  pointer-events: none;
}
```
